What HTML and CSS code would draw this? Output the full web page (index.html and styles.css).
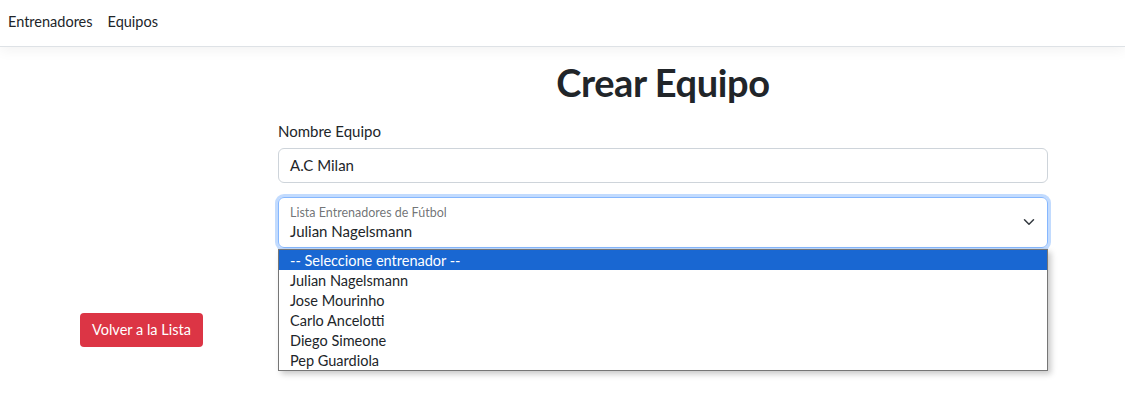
FILE: index.html
```html
<!DOCTYPE html>
<html lang="es">
<head>
<meta charset="utf-8">
<title>Crear Equipo</title>
<link rel="stylesheet" href="styles.css">
</head>
<body>
<nav class="topnav">
  <a class="nav-link" href="#">Entrenadores</a>
  <a class="nav-link" href="#">Equipos</a>
</nav>
<main class="page">
  <section class="form-col">
    <h1 class="title">Crear Equipo</h1>
    <label class="field-label" for="nombre">Nombre Equipo</label>
    <div class="input" id="nombre">A.C Milan</div>
    <div class="select-wrap">
      <div class="select focus">
        <span class="float-label">Lista Entrenadores de Fútbol</span>
        <span class="select-value">Julian Nagelsmann</span>
        <svg class="chevron" width="16" height="12" viewBox="0 0 16 16" aria-hidden="true">
          <path d="m2 5 6 6 6-6" fill="none" stroke="#343a40" stroke-width="2" stroke-linecap="round" stroke-linejoin="round"/>
        </svg>
      </div>
      <ul class="dropdown">
        <li class="opt selected">-- Seleccione entrenador --</li>
        <li class="opt">Julian Nagelsmann</li>
        <li class="opt">Jose Mourinho</li>
        <li class="opt">Carlo Ancelotti</li>
        <li class="opt">Diego Simeone</li>
        <li class="opt">Pep Guardiola</li>
      </ul>
    </div>
  </section>
  <div class="actions">
    <a class="btn-danger" href="#">Volver a la Lista</a>
  </div>
</main>
</body>
</html>
```

FILE: styles.css
```css
* { box-sizing: border-box; }
html, body { margin: 0; padding: 0; background: #fff; }
body {
  font-family: "Lato", "Noto Sans", sans-serif;
  color: #212529;
  font-size: 16px;
  line-height: 1.5;
  min-height: 415px;
}
.topnav {
  height: 47px;
  display: flex;
  align-items: center;
  gap: 15px;
  padding: 0 0 2px 8px;
  border-bottom: 1px solid #dee2e6;
  box-shadow: 0 4px 12px rgba(0,0,0,.05);
}
.nav-link {
  color: #212529;
  text-decoration: none;
  font-size: 14.5px;
}
.page {
  padding-top: 11px;
  min-height: 368px;
}
.form-col {
  margin-left: 278px;
  width: 770px;
  display: flex;
  flex-direction: column;
}
.title {
  margin: 0 0 13px;
  font-size: 38px;
  font-weight: 700;
  letter-spacing: -0.4px;
  line-height: 48px;
  text-align: center;
}
.field-label {
  display: block;
  font-size: 15px;
  line-height: 24px;
  margin-bottom: 5px;
}
.input {
  height: 35px;
  border: 1px solid #ced4da;
  border-radius: 6px;
  padding: 0 11px;
  display: flex;
  align-items: center;
  font-size: 15px;
}
.select-wrap {
  position: relative;
  margin-top: 14px;
}
.select {
  position: relative;
  height: 51px;
  border: 1px solid #86b7fe;
  border-radius: 6px;
  box-shadow: 0 0 0 3px rgba(13,110,253,.25);
  padding: 7px 40px 0 11px;
  display: flex;
  flex-direction: column;
}
.float-label {
  font-size: 12.5px;
  line-height: 16px;
  color: rgba(33,37,41,.65);
}
.select-value {
  font-size: 15px;
  line-height: 20px;
}
.chevron {
  position: absolute;
  right: 10px;
  top: 18px;
}
.dropdown {
  position: absolute;
  left: 0;
  top: 52px;
  width: 770px;
  margin: 0;
  padding: 0;
  list-style: none;
  background: #fff;
  border: 1px solid #767676;
  box-shadow: 3px 3px 6px rgba(0,0,0,.22);
  z-index: 5;
}
.opt {
  height: 20px;
  line-height: 19px;
  padding: 1px 0 0 11px;
  font-size: 14.5px;
  color: #212529;
}
.opt.selected {
  background: #1967d2;
  color: #fff;
}
.actions {
  margin-top: 65px;
  padding-left: 80px;
}
.btn-danger {
  display: inline-flex;
  align-items: center;
  height: 34px;
  padding: 0 12px;
  background: #dc3545;
  color: #fff;
  border-radius: 4px;
  text-decoration: none;
  font-size: 14.5px;
}
```
